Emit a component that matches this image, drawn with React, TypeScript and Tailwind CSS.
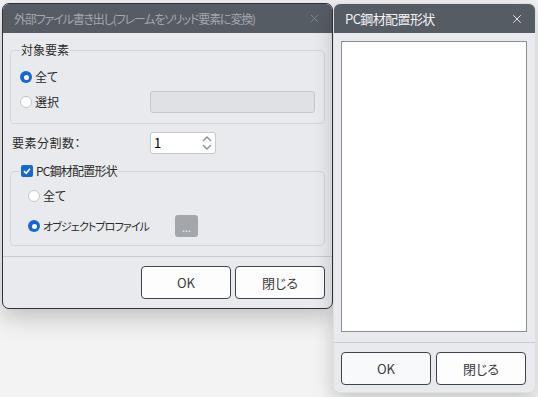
import { X } from "lucide-react";

const Radio = ({ checked }: { checked?: boolean }) =>
  checked ? (
    <span className="flex h-[12px] w-[12px] shrink-0 items-center justify-center rounded-full bg-[#1667d6]">
      <span className="h-[5px] w-[5px] rounded-full bg-white" />
    </span>
  ) : (
    <span className="h-[12px] w-[12px] shrink-0 rounded-full border border-[#c3c6ca] bg-white" />
  );

const Btn = ({ label, primary }: { label: string; primary?: boolean }) => (
  <button
    className={`flex h-[33px] w-[90px] items-center justify-center rounded-[4px] border border-[#3f444a] text-[13px] text-[#3a3a3a] ${
      primary ? "bg-[#f7f9fb]" : "bg-[#fdfdfd]"
    }`}
  >
    {label}
  </button>
);

const App = () => {
  return (
    <div className="flex h-[397px] w-[538px] items-start overflow-hidden bg-[#f3f3f3] font-['Noto_Sans_CJK_JP','Liberation_Sans',sans-serif] [font-feature-settings:'palt']">
      {/* main dialog */}
      <div className="relative z-0 ml-[2px] mt-[3px] flex h-[306px] w-[331px] flex-col overflow-hidden rounded-[7px] border border-[#2f3338] bg-[#e9eaed] shadow-[0_8px_24px_rgba(0,0,0,0.22)]">
        <div className="flex h-[29px] shrink-0 items-center justify-between bg-[#565c63] pl-[11px] pr-[11px]">
          <span className="text-[12px] tracking-[-1.15px] text-[#a2a7ad]">
            外部ファイル書き出し(フレームをソリッド要素に変換)
          </span>
          <X size={13} strokeWidth={1.3} className="text-[#8d9399]" />
        </div>

        <div className="flex flex-col px-[7px] text-[12px] text-[#2b2b2b]">
          <fieldset className="mt-[9px] rounded-[4px] border border-[#d3d5d9] px-[9px] pb-[10px] pt-[8px]">
            <legend className="px-[1px] text-[12px] leading-[16px]">対象要素</legend>
            <div className="flex h-[22px] items-center gap-[3px]">
              <Radio checked />
              <span>全て</span>
            </div>
            <div className="mt-[3px] flex h-[22px] items-center gap-[3px]">
              <Radio />
              <span>選択</span>
              <div className="ml-auto h-[22px] w-[165px] rounded-[3px] border border-[#c5c8cc] bg-[#dfe1e4]" />
            </div>
          </fieldset>

          <div className="mt-[8px] flex h-[22px] items-center pl-[2px]">
            <span className="w-[138px] text-[12px] tracking-[0.5px]">要素分割数：</span>
            <div className="flex h-[22px] w-[66px] items-center justify-between rounded-[3px] border border-[#c5c8cc] bg-white pl-[3px] pr-[2px]">
              <span className="text-[13px] text-black">1</span>
              <svg width="12" height="18" viewBox="0 0 12 18" fill="none" stroke="#8a8f95" strokeWidth="1.4">
                <path d="M2 7 L6 3 L10 7" />
                <path d="M2 11 L6 15 L10 11" />
              </svg>
            </div>
          </div>

          <fieldset className="mt-[9px] rounded-[4px] border border-[#d3d5d9] pb-[8px] pl-[17px] pr-[9px] pt-[6px]">
            <legend className="-ml-[8px] flex items-center gap-[3px] px-[1px] text-[12px] leading-[16px] tracking-[-0.8px]">
              <span className="flex h-[12px] w-[12px] items-center justify-center rounded-[2px] bg-[#1667d6]">
                <svg width="10" height="10" viewBox="0 0 10 10" fill="none" stroke="white" strokeWidth="1.6">
                  <path d="M2 5.2 L4.2 7.3 L8 2.8" />
                </svg>
              </span>
              PC鋼材配置形状
            </legend>
            <div className="flex h-[22px] items-center gap-[3px]">
              <Radio />
              <span>全て</span>
            </div>
            <div className="mt-[8px] flex h-[22px] items-center gap-[3px]">
              <Radio checked />
              <span className="text-[11px] tracking-[-0.9px]">オブジェクトプロファイル</span>
              <div className="ml-[23px] flex h-[22px] w-[23px] items-end justify-center rounded-[3px] bg-[#a3a7ac] pb-[4px] text-[11px] leading-[11px] text-[#eceef0]">
                ...
              </div>
            </div>
          </fieldset>
        </div>

        <div className="mt-[10px] border-t border-[#c9cbcf]" />
        <div className="flex justify-end gap-[4px] px-[7px] pt-[9px]">
          <Btn label="OK" />
          <Btn label="閉じる" />
        </div>
      </div>

      {/* side dialog */}
      <div className="relative z-10 mt-[3px] flex h-[390px] w-[203px] flex-col overflow-hidden rounded-[7px] border border-[#dedfe2] bg-[#e9eaed] shadow-[0_6px_20px_rgba(0,0,0,0.2)]">
        <div className="flex h-[29px] shrink-0 items-center justify-between bg-[#565c63] pl-[11px] pr-[11px]">
          <span className="text-[13px] tracking-[-0.6px] text-[#f2f3f5]">PC鋼材配置形状</span>
          <X size={14} strokeWidth={1.4} className="text-white" />
        </div>
        <div className="ml-[7px] mr-[8px] mt-[8px] h-[291px] border border-[#8b9097] bg-white" />
        <div className="mt-[10px] border-t border-[#c9cbcf]" />
        <div className="flex gap-[5px] px-[7px] pt-[9px]">
          <Btn label="OK" primary />
          <Btn label="閉じる" />
        </div>
      </div>
    </div>
  );
};

export default App;
